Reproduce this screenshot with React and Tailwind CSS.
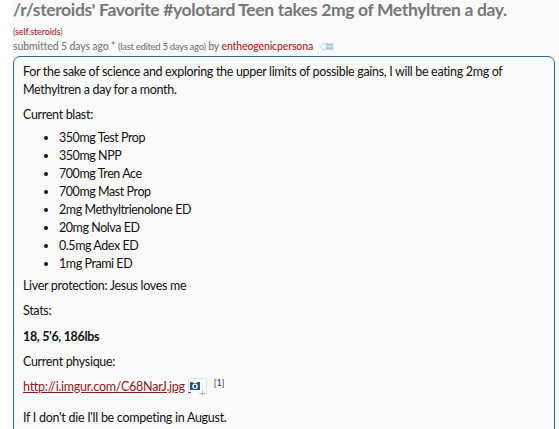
const doses = [
  '350mg Test Prop',
  '350mg NPP',
  '700mg Tren Ace',
  '700mg Mast Prop',
  '2mg Methyltrienolone ED',
  '20mg Nolva ED',
  '0.5mg Adex ED',
  '1mg Prami ED'
]

function TagIcon() {
  return (
    <svg width="14" height="7" viewBox="0 0 14 7" className="ml-[7px] inline-block align-[0px]">
      <path d="M3 .5h10v6H3L.7 4.5v-2z" fill="#f3f7fb" stroke="#c5d8e6" />
      <path d="M6 1h7v5H6z" fill="#a9cdea" />
      <path d="M7 3.5h5" stroke="#d7e9f7" />
    </svg>
  )
}

function ExpandoIcon() {
  return (
    <svg width="19" height="18" viewBox="0 0 19 18" className="ml-[3px] shrink-0">
      <path d="M.5 17V.5h18V17" fill="#fcfcfc" stroke="#e2e2e2" />
      <path d="M2 4h3v1h4V4h3v8H2z" fill="#205590" />
      <circle cx="7" cy="8.2" r="2.8" fill="#e9f1f8" />
      <path d="M6 7h2v3H6z" fill="#205590" />
      <path d="M0 14.5h3" stroke="#b83b3b" />
      <path d="M11.5 15.5h6M14.5 12.5v5" stroke="#b3b3b3" />
    </svg>
  )
}

export default function App() {
  return (
    <div className="h-[429px] w-[559px] overflow-hidden border-l-[12px] border-white bg-[#fafafa] pr-1 pl-px font-['Lato',sans-serif] text-[#111]">
      {/* Post header */}
      <h1 className="h-[27px] text-[17.5px] leading-[20px] font-bold tracking-[-0.36px] whitespace-nowrap text-[#777]">
        /r/steroids' Favorite #yolotard Teen takes 2mg of Methyltren a day.
      </h1>
      <div className="h-[12px] text-[9px] leading-[10px] font-medium tracking-[-0.15px] whitespace-nowrap text-[#777]">
        (<a className="text-[#b22222]">self.steroids</a>)
      </div>
      <div className="h-[17px] text-[10.5px] leading-[14px] font-medium tracking-[-0.13px] whitespace-nowrap text-[#777]">
        submitted 5 days ago * <span className="text-[9.5px] tracking-[-0.3px]">(last edited 5 days ago)</span> by{' '}
        <a className="text-[#b22222]">entheogenicpersona</a>
        <TagIcon />
      </div>

      {/* Self text */}
      <div className="h-[400px] w-[542px] rounded-[7px] border border-[#336699] px-[9px] pt-[6px] text-[12.5px] leading-[18px] tracking-[-0.32px] whitespace-nowrap">
        <p>
          For the sake of science and exploring the upper limits of possible gains, I will be eating 2mg of
          <br />
          Methyltren a day for a month.
        </p>
        <p className="mt-[7px]">Current blast:</p>
        <ul className="mt-[5px] list-disc pl-9 tracking-[-0.44px]">
          {doses.map((dose) => (
            <li key={dose}>{dose}</li>
          ))}
        </ul>
        <p className="mt-1">Liver protection: Jesus loves me</p>
        <p className="mt-[7px]">Stats:</p>
        <p className="mt-[8px] font-bold">18, 5'6, 186lbs</p>
        <p className="mt-[7px]">Current physique:</p>
        <div className="mt-[7px] flex h-[24px]">
          <a className="tracking-[-0.26px] text-[#8b1a1a] underline">http://i.imgur.com/C68NarJ.jpg</a>
          <ExpandoIcon />
          <span className="ml-[7px] text-[9px] leading-[10px] tracking-normal text-[#551a6b]">[1]</span>
        </div>
        <p className="mt-[7px] tracking-[-0.28px]">If I don't die I'll be competing in August.</p>
      </div>
    </div>
  )
}
